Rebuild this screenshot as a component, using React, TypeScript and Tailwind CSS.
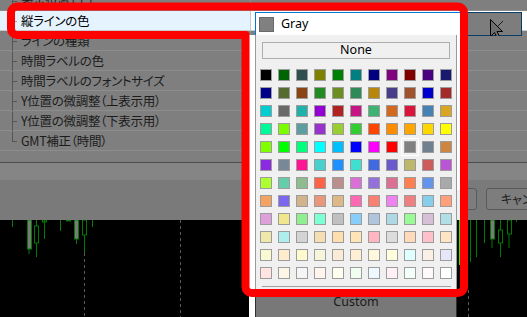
const JP = "font-['Noto_Sans_CJK_JP','Noto_Sans',sans-serif] [font-feature-settings:'palt']";
const UI = "font-['Noto_Sans','Liberation_Sans',sans-serif]";

// MT4 web colour table, 11 per row
const colors = [
  "#000000", "#006400", "#2F4F4F", "#808000", "#008000", "#008080", "#000080", "#800080", "#800000", "#4B0082", "#191970",
  "#00008B", "#556B2F", "#8B4513", "#228B22", "#6B8E23", "#2E8B57", "#B8860B", "#483D8B", "#A0522D", "#0000CD", "#A52A2A",
  "#00CED1", "#696969", "#20B2AA", "#9400D3", "#B22222", "#C71585", "#3CB371", "#D2691E", "#DC143C", "#4682B4", "#DAA520",
  "#00FA9A", "#7CFC00", "#5F9EA0", "#9932CC", "#9ACD32", "#32CD32", "#FF4500", "#FF8C00", "#FFA500", "#FFD700", "#FFFF00",
  "#7FFF00", "#00FF00", "#00FF7F", "#00FFFF", "#00BFFF", "#0000FF", "#FF00FF", "#FF0000", "#808080", "#708090", "#CD853F",
  "#8A2BE2", "#778899", "#FF1493", "#48D1CC", "#1E90FF", "#40E0D0", "#4169E1", "#6A5ACD", "#BDB76B", "#CD5C5C", "#BA55D3",
  "#ADFF2F", "#66CDAA", "#8FBC8F", "#FF6347", "#BC8F8F", "#DA70D6", "#9370DB", "#DB7093", "#FF7F50", "#6495ED", "#A9A9A9",
  "#F4A460", "#7B68EE", "#D2B48C", "#E9967A", "#DEB887", "#FF69B4", "#FA8072", "#EE82EE", "#F08080", "#87CEEB", "#FFA07A",
  "#DDA0DD", "#F0E68C", "#90EE90", "#7FFFD4", "#C0C0C0", "#87CEFA", "#B0C4DE", "#ADD8E6", "#98FB98", "#D8BFD8", "#B0E0E6",
  "#EEE8AA", "#AFEEEE", "#D3D3D3", "#F5DEB3", "#FFDEAD", "#FFE4B5", "#FFB6C1", "#DCDCDC", "#FFDAB9", "#FFC0CB", "#FFE4C4",
  "#FAFAD2", "#FFEBCD", "#FFFACD", "#F5F5DC", "#FAEBD7", "#FFEFD5", "#FFF8DC", "#FFFFE0", "#E0FFFF", "#FAF0E6", "#E6E6FA",
  "#FFE4E1", "#FDF5E6", "#F5F5F5", "#FFF5EE", "#FFFFF0", "#F0FFF0", "#F0F8FF", "#FFF0F5", "#F5FFFA", "#FFFAFA", "#FFFFFF",
];

const rows = [
  "表示位置（上）",
  "縦ラインの色",
  "ラインの種類",
  "時間ラベルの色",
  "時間ラベルのフォントサイズ",
  "Y位置の微調整（上表示用）",
  "Y位置の微調整（下表示用）",
  "GMT補正（時間）",
];

function TreeGlyph({ last, color }: { last?: boolean; color: string }) {
  return (
    <svg width="9" height="19" className="shrink-0">
      <line x1="0.5" y1="0" x2="0.5" y2={last ? 10 : 19} stroke={color} />
      <line x1="0.5" y1="9.5" x2="5" y2="9.5" stroke={color} />
    </svg>
  );
}

function PropRow({ label, index }: { label: string; index: number }) {
  const active = index === 1;
  return (
    <div
      className={`flex h-[20px] shrink-0 border-b ${
        active ? "border-[#c9c9c9]" : "border-[#8d8d8d]"
      } ${index === 0 ? "mt-[-9px]" : ""}`}
    >
      <div
        className={`flex w-[250px] items-center pl-[12px] pt-px ${
          active ? "bg-[#e5f3ff] text-black" : "text-[#1c1c1c]"
        }`}
      >
        <TreeGlyph last={index === rows.length - 1} color={active ? "#a0a0a0" : "#555555"} />
        <span className={`${JP} text-[12.5px] leading-none tracking-[-0.3px]`}>{label}</span>
      </div>
      <div className={`flex-1 border-l ${active ? "border-[#c9c9c9] bg-white" : "border-[#8d8d8d]"}`} />
    </div>
  );
}

function Candles() {
  const g = "#007a00";
  return (
    <svg width="527" height="97" className="block">
      <g stroke="#5a5a5a" strokeDasharray="3 3">
        <line x1="84.5" y1="15" x2="84.5" y2="97" />
        <line x1="180.5" y1="0" x2="180.5" y2="97" />
        <line x1="468.5" y1="70" x2="468.5" y2="97" />
      </g>
      <g stroke={g} fill="none">
        <line x1="12.5" y1="0" x2="12.5" y2="7" />
        <line x1="29" y1="29" x2="29" y2="34" />
        <rect x="27.5" y="0" width="4" height="29" fill="#7a7a7a" />
        <line x1="36.5" y1="0" x2="36.5" y2="6" />
        <line x1="36.5" y1="23" x2="36.5" y2="37" />
        <rect x="34.5" y="6" width="4" height="17" />
        <line x1="44.5" y1="0" x2="44.5" y2="19" />
        <rect x="42.5" y="0" width="4" height="2" />
        <line x1="60.5" y1="0" x2="60.5" y2="11" />
        <rect x="66.5" y="0" width="4" height="1" />
        <line x1="76.5" y1="19" x2="76.5" y2="24" />
        <rect x="74.5" y="0" width="4" height="19" fill="#7a7a7a" />
        <line x1="84.5" y1="15" x2="84.5" y2="33" />
        <rect x="82.5" y="0" width="4" height="15" />
        <line x1="92.5" y1="0" x2="92.5" y2="7" />

        <line x1="470.5" y1="0" x2="470.5" y2="42" />
        <line x1="476.5" y1="0" x2="476.5" y2="37" />
        <line x1="484.5" y1="0" x2="484.5" y2="23" />
        <line x1="492" y1="19" x2="492" y2="28" />
        <rect x="490.5" y="0" width="4" height="19" fill="#7a7a7a" />
        <line x1="500.5" y1="0" x2="500.5" y2="10" />
        <line x1="500.5" y1="23" x2="500.5" y2="37" />
        <rect x="498.5" y="10" width="4" height="13" />
        <line x1="509" y1="14" x2="509" y2="28" />
        <rect x="507.5" y="0" width="4" height="14" />
        <line x1="516.5" y1="0" x2="516.5" y2="2" />
      </g>
      <line x1="459.5" y1="0" x2="459.5" y2="45" stroke="#00ff00" />
    </svg>
  );
}

export default function App() {
  return (
    <div className="relative h-[317px] w-[527px] overflow-hidden bg-black">
      {/* dialog, dimmed */}
      <div className="flex h-[220px] flex-col bg-[#7a7a7a]">
        <div className="flex h-[163px] shrink-0 flex-col overflow-hidden border-b border-[#4d4d4d] bg-[#7f7f7f]">
          {rows.map((r, i) => (
            <PropRow key={r} label={r} index={i} />
          ))}
        </div>
        <div className="h-[17px] shrink-0 bg-[#858585]" />
        <div className="flex items-start gap-[9px] pl-[402px] pt-[8px]">
          <div className="h-[22px] w-[75px] shrink-0 rounded-[3px] border border-[#5a5a5a] bg-[#7d7d7d]" />
          <div
            className={`${JP} flex h-[22px] w-[84px] shrink-0 items-center justify-center rounded-[3px] border border-[#5a5a5a] bg-[#7d7d7d] text-[12px] text-[#1c1c1c]`}
          >
            キャンセル
          </div>
        </div>
      </div>
      <Candles />

      {/* combobox editor */}
      <div className="absolute left-[255px] top-[12px] flex h-[24px] w-[267px]">
        <div className="flex w-[205px] items-center gap-[7px] border-y border-l border-[#0078d7] bg-white pl-[3px]">
          <div className="h-[15px] w-[15px] border border-[#6a6a6a] bg-[#808080]" />
          <span className={`${UI} text-[12.5px] leading-none text-black`}>Gray</span>
        </div>
        <div className="relative flex-1 border-y border-r border-[#0a3d66] bg-[#7d7d7d]">
          <svg width="30" height="24" className="absolute right-[2px] top-[-1px]">
            <polyline points="3,9 8.5,14.5 14,9" fill="none" stroke="#1a1a1a" />
            <path d="M1.5 7.5 V24.5 L5.5 20.5 L8.5 26.5 L11 25.5 L8 19.5 L13.5 19.5 Z" fill="#6e6e6e" stroke="#000" />
          </svg>
        </div>
      </div>

      {/* colour popup */}
      <div className="absolute bottom-0 left-[249px] top-[35px] flex w-[211px]">
        <div className="flex w-[6px] flex-col bg-white" />
        <div className="flex w-[202px] flex-col">
          <div className="flex h-[258px] flex-col border-x border-[#9a9a9a] bg-[#f0f0f0]">
            <div
              className={`${UI} ml-[6px] mt-[7px] flex h-[17px] w-[188px] items-center justify-center border border-[#adadad] bg-[#f0f0f0] text-[12.5px] text-black`}
            >
              None
            </div>
            <div className="ml-[4px] mt-[10px] grid grid-cols-[repeat(11,12px)] gap-[6px]">
              {colors.map((c, i) => (
                <div
                  key={i}
                  className={`h-[12px] w-[12px] border border-[#9c9c9c] ${
                    c === "#808080" ? "outline outline-1 outline-offset-2 outline-white" : ""
                  }`}
                  style={{ backgroundColor: c }}
                />
              ))}
            </div>
            <div className="ml-[6px] mt-[7px] h-px w-[189px] bg-[#a0a0a0]" />
          </div>
          <div
            className={`${UI} flex h-[24px] items-center justify-center border-x border-[#303030] bg-[#787878] pb-[5px] text-[12.5px] text-[#1a1a1a]`}
          >
            Custom
          </div>
        </div>
        <div className="flex w-[3px] flex-col">
          <div className="h-[155px] bg-white" />
          <div className="h-[30px] bg-[#f0f0f0]" />
        </div>
      </div>

      {/* red annotation frame */}
      <svg width="527" height="317" className="pointer-events-none absolute left-0 top-0">
        <path
          d="M17 6.5 H458 A6 6 0 0 1 464 12.5 V287 A6 6 0 0 1 458 293 H251.5 A6 6 0 0 1 245.5 287 V35 H17 A6 6 0 0 1 11 29 V12.5 A6 6 0 0 1 17 6.5 Z"
          fill="none"
          stroke="#ff0000"
          strokeWidth="8"
          strokeLinejoin="round"
        />
      </svg>
    </div>
  );
}
